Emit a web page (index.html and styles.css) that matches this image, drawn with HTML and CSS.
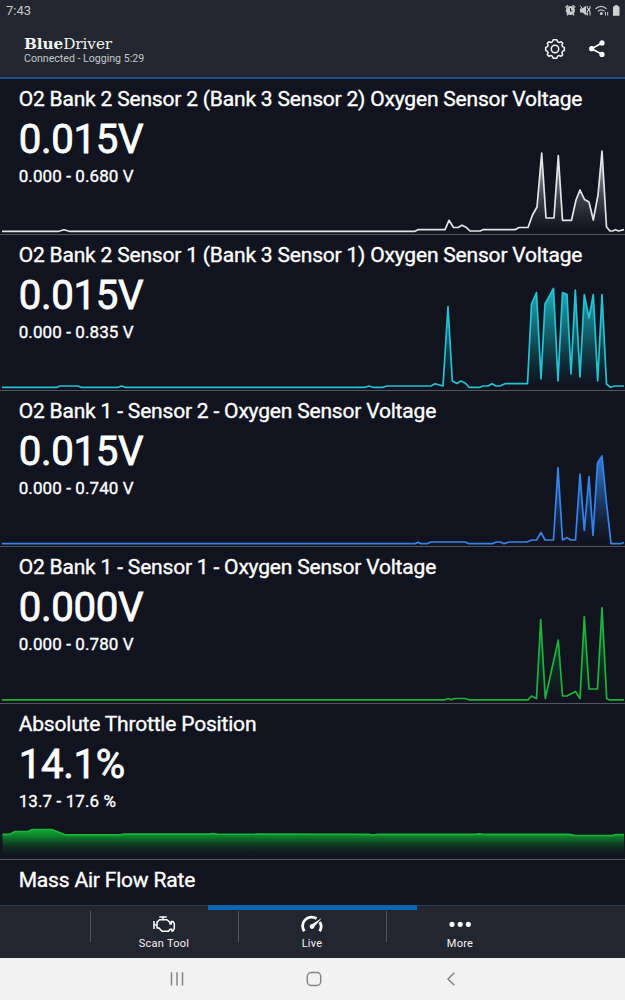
FILE: index.html
```html
<!DOCTYPE html>
<html lang="en">
<head>
<meta charset="utf-8">
<title>BlueDriver Live Data</title>
<link rel="stylesheet" href="styles.css">
</head>
<body>
<div class="screen">
  <header class="header">
    <div class="status">
      <span class="clock">7:43</span>
      <svg class="status-icons" width="56" height="14" viewBox="565 3 56 14">
        <g fill="none" stroke="#c9cacc" stroke-width="1.5">
          <path d="M565.5 7.5 L568 5.3 M575.2 7.5 L572.7 5.3 M567 15.2 L568 14 M574 15.2 L573 14"/>
          <path d="M595.500 8.800 Q601 4 606.500 8.800 M598 11.300 Q601 8.600 604.500 11.300" stroke-width="1.300"/>
          <path d="M605.500 12v3.500 M607.700 12v3.500" stroke-width="1"/>
          <path d="M587.300 6v2l1.500 1.500-1.500 2v4M590 6v2l-1 1.500 1 2v4" stroke-width="1.100"/>
        </g>
        <circle cx="570.400" cy="10.500" r="4.600" fill="#c9cacc"/>
        <path d="M570.500 8v3h2" fill="none" stroke="#23262f"/>
        <path d="M580 8.500h2.500l3.500-3v10l-3.500-3h-2.500z" fill="#c9cacc"/>
        <path d="M580 5.500l7.500 9.500" stroke="#c9cacc" stroke-width="1"/>
        <circle cx="601.300" cy="13.400" r="1.500" fill="#c9cacc"/>
        <path d="M613 6.500h1.500v-1.300h3.500v1.300h1.500v9.300h-6.500z" fill="#d0d1d3"/>
      </svg>
    </div>
    <div class="toolbar">
      <div class="brand">
        <div class="logo"><b>Blue</b>Driver</div>
        <div class="connection">Connected - Logging 5:29</div>
      </div>
      <div class="actions">
        <svg width="22" height="22" viewBox="-11 -11 22 22" fill="none" stroke="#f4f4f5" stroke-width="1.500" stroke-linejoin="round">
          <path d="M-1.800-9.200H1.800L2.700-7.100L4.200-6.500L6.200-7.300L7.700-5.800L6.900-3.900L7.400-2.400L9.300-1.600V1.600L7.400 2.400L6.900 3.900L7.700 5.800L6.200 7.300L4.200 6.500L2.700 7.100L1.800 9.200H-1.800L-2.700 7.100L-4.200 6.500L-6.200 7.300L-7.700 5.800L-6.900 3.900L-7.400 2.400L-9.300 1.600V-1.600L-7.400-2.400L-6.900-3.900L-7.700-5.800L-6.200-7.300L-4.200-6.500L-2.700-7.100Z"/>
          <circle r="3.700"/>
        </svg>
        <svg width="18" height="20" viewBox="588 39.500 18 20" fill="#fff">
          <path d="M602 43.500L591.500 49.200L602 54.800" fill="none" stroke="#fff" stroke-width="1.600"/>
          <circle cx="602" cy="43.400" r="2.600"/><circle cx="591.700" cy="49.200" r="2.600"/><circle cx="602" cy="54.900" r="2.600"/>
        </svg>
      </div>
    </div>
  </header>

  <main class="list">
    <section class="row">
      <div class="info">
        <h2 class="name">O2 Bank 2 Sensor 2 (Bank 3 Sensor 2) Oxygen Sensor Voltage</h2>
        <div class="value">0.015V</div>
        <div class="range">0.000 - 0.680 V</div>
      </div>
      <svg class="chart white" viewBox="0 79 625 156.250">
        <defs><linearGradient id="g1" gradientUnits="userSpaceOnUse" x1="0" y1="151" x2="0" y2="231"><stop offset="0" stop-color="#e8e8ea" stop-opacity=".9"/><stop offset=".55" stop-color="#a5a5ad" stop-opacity=".35"/><stop offset="1" stop-color="#777781" stop-opacity="0"/></linearGradient></defs>
        <path class="area" fill="url(#g1)" d="M519 231.300V227.500H528L532.500 215L537 207L541.700 153L546 218H554L558.300 155.500L562.500 220.300H571.500L576 200L580 190L584.500 199.500L589 202L593.300 220L598 195L602 151L606.500 227L610 231Z"/>
        <polyline points="2,231.300 59,231.300 64,229.800 69,231.300 415,231.300 418,229.700 445,229.700 449,220.300 453.500,227.500 458,227.500 462,225.200 466,227.200 470,231 480,231 483,229.700 515,229.700 519,227.500 528,227.500 532.500,215 537,207 541.700,153 546,218 554,218 558.300,155.500 562.500,220.300 571.500,220.300 576,200 580,190 584.500,199.500 589,202 593.300,220 598,195 602,151 606.500,227 610,231 613,230.800 615.500,229.700 618.500,231 624,229.700"/>
      </svg>
    </section>

    <section class="row">
      <div class="info">
        <h2 class="name">O2 Bank 2 Sensor 1 (Bank 3 Sensor 1) Oxygen Sensor Voltage</h2>
        <div class="value">0.015V</div>
        <div class="range">0.000 - 0.835 V</div>
      </div>
      <svg class="chart cyan" viewBox="0 235 625 156.250">
        <defs><linearGradient id="g2" gradientUnits="userSpaceOnUse" x1="0" y1="288" x2="0" y2="387"><stop offset="0" stop-color="#20bacb" stop-opacity=".95"/><stop offset=".5" stop-color="#149aa6" stop-opacity=".5"/><stop offset="1" stop-color="#0d5961" stop-opacity="0"/></linearGradient></defs>
        <path class="area" fill="url(#g2)" d="M443 386L448 306.500L452.300 381L457 387ZM527.500 387V383.700L531.500 304L536.500 292.500L541 379L545 304L553.500 288.500L558 381L562.500 292.500L567 294.500L571 374L575.300 290L580 377L584.300 294.500L589 318L593.300 294.500L597.700 381L602 294.500L606.500 384L610 387Z"/>
        <polyline points="2,387.300 57,387.300 60,386 78,386 81,387.300 118,387.300 121.500,386 125,387.300 365,387.300 369,386 373,387.300 383,387.300 387,386 431,386 435,383.700 443,386 448,306.500 452.300,381 457,383.500 461,381 465.500,383.300 469,387.300 480,387.300 483,386 488,386 492,383.700 496,386 500,386 505,383.700 527.500,383.700 531.500,304 536.500,292.500 541,379 545,304 553.500,288.500 558,381 562.500,292.500 567,294.500 571,374 575.300,290 580,377 584.300,294.500 589,318 593.300,294.500 597.700,381 602,294.500 606.500,384 610.500,387.300 615,386 624,386"/>
      </svg>
    </section>

    <section class="row">
      <div class="info">
        <h2 class="name">O2 Bank 1 - Sensor 2 - Oxygen Sensor Voltage</h2>
        <div class="value">0.015V</div>
        <div class="range">0.000 - 0.740 V</div>
      </div>
      <svg class="chart blue" viewBox="0 391 625 156.250">
        <defs><linearGradient id="g3" gradientUnits="userSpaceOnUse" x1="0" y1="456" x2="0" y2="543"><stop offset="0" stop-color="#3484e8" stop-opacity=".95"/><stop offset=".5" stop-color="#2867b5" stop-opacity=".5"/><stop offset="1" stop-color="#153766" stop-opacity="0"/></linearGradient></defs>
        <path class="area" fill="url(#g3)" d="M553.500 543V540L558 467.500L562.500 540H575.500L580 474L584.300 530.500L589 476.500L593 535.500L597.500 463L602 456L606.500 503L611 543.500Z"/>
        <polyline points="2,543.600 415,543.600 418,542.400 421,543.600 427,543.600 431,542 465,542 469,543.600 493,543.600 496,542 500,542 504,543.600 509,542 527,542 532,540 536.500,540 541,532.500 545,540 553.500,540 558,467.500 562.500,540 567,537.700 571,540 575.500,540 580,474 584.300,530.500 589,476.500 593,535.500 597.500,463 602,456 606.500,503 611,543.600 621,543.600 624,542.500"/>
      </svg>
    </section>

    <section class="row">
      <div class="info">
        <h2 class="name">O2 Bank 1 - Sensor 1 - Oxygen Sensor Voltage</h2>
        <div class="value">0.000V</div>
        <div class="range">0.000 - 0.780 V</div>
      </div>
      <svg class="chart green" viewBox="0 547 625 156.250">
        <defs><linearGradient id="g4" gradientUnits="userSpaceOnUse" x1="0" y1="607" x2="0" y2="699"><stop offset="0" stop-color="#1cb442" stop-opacity=".8"/><stop offset=".5" stop-color="#168237" stop-opacity=".4"/><stop offset="1" stop-color="#0d4921" stop-opacity="0"/></linearGradient></defs>
        <path class="area" fill="url(#g4)" d="M536.500 698.500L540.700 619.500L545.300 698.500L558.300 640L562.500 696H567L575.500 691.500L580 698.500L584.300 616.500L589 689H597.500L602 607.500L606.700 698.500Z"/>
        <polyline points="2,699.800 445,699.800 448,698.500 451,699.800 455,698.500 465,698.500 469,699.800 528,699.800 531.500,696 536.500,698.500 540.700,619.500 545.300,698.500 558.300,640 562.500,696 567,696 575.500,691.500 580,698.500 584.300,616.500 589,689 597.500,689 602,607.500 606.700,698.500 609,699.800 624,699.800"/>
      </svg>
    </section>

    <section class="row">
      <div class="info">
        <h2 class="name">Absolute Throttle Position</h2>
        <div class="value">14.1%</div>
        <div class="range">13.7 - 17.6 %</div>
      </div>
      <svg class="chart green" viewBox="0 704 625 156.250">
        <defs><linearGradient id="g5" gradientUnits="userSpaceOnUse" x1="0" y1="829" x2="0" y2="857"><stop offset="0" stop-color="#10a832"/><stop offset=".25" stop-color="#0c842a"/><stop offset="1" stop-color="#10131f" stop-opacity=".1"/></linearGradient></defs>
        <path class="area" fill="url(#g5)" d="M2.500 857V834.300H10L15 831.500H28L32 829.500H52L58 832L65 834.800H120L124 834.200H369L373 835L378 834.400H570L575 835.500H612L616 834.500H624V857Z"/>
        <polyline points="2.500,834.300 10,834.300 15,831.500 28,831.500 32,829.500 52,829.500 58,832 65,834.800 120,834.800 124,834.200 210,834.200 213,833.500 217,834.200 369,834.300 373,835 378,834.400 476,834.400 479,833.900 483,834.400 570,834.400 575,835.500 612,835.500 616,834.500 624,834.500"/>
      </svg>
    </section>

    <section class="row">
      <div class="info"><h2 class="name">Mass Air Flow Rate</h2></div>
    </section>
  </main>

  <nav class="tabs">
    <div class="indicator"></div>
    <div class="tab">
      <svg width="24" height="20" viewBox="152 914 24 20" fill="none" stroke="#fff" stroke-width="1.500" stroke-linejoin="round">
        <path d="M154 921V929M154 925H157M159.300 917H166.700M163 917V919.500M157 922.300L159.500 919.700H167L170 922.500V924H171.300V921.500H173L174.300 923.500V928.500L173 931H171.800V929.300H170L168.500 931.200H162L159 928H157Z"/>
      </svg>
      <span>Scan Tool</span>
    </div>
    <div class="tab">
      <svg width="24" height="20" viewBox="300 914 24 20" fill="none" stroke="#fff">
        <path d="M304.300 931.300A9 9 0 0 1 316.500 918.500M319.800 922A9 9 0 0 1 319.700 931.300" stroke-width="2.800"/>
        <path d="M310.500 925.200L321.800 918L313.400 927.800Z" fill="#fff" stroke="none"/>
        <circle cx="312" cy="926.600" r="2.400" fill="#fff" stroke="none"/>
      </svg>
      <span>Live</span>
    </div>
    <div class="tab">
      <svg width="24" height="20" viewBox="448 914 24 20" fill="#fff"><circle cx="452" cy="924.300" r="2.600"/><circle cx="460.200" cy="924.300" r="2.600"/><circle cx="468.300" cy="924.300" r="2.600"/></svg>
      <span>More</span>
    </div>
  </nav>

  <footer class="system">
    <svg width="625" height="42" viewBox="0 958 625 42" fill="none" stroke="#858585" stroke-width="1.500">
      <path d="M171.500 972.200v13.300M177 972.200v13.300M182.500 972.200v13.300"/>
      <rect x="307.300" y="972.500" width="13.400" height="13" rx="4"/>
      <path d="M454.300 972.700L448 979L454.300 985.300"/>
    </svg>
  </footer>
</div>
</body>
</html>
```

FILE: styles.css
```css
* { box-sizing: border-box; }
body { margin: 0; background: #11131e; font-family: Roboto, sans-serif; color: #fff; }
svg { display: block; }
.screen { width: 625px; height: 1000px; display: flex; flex-direction: column; overflow: hidden; }

.header { height: 79px; flex: none; background: #23262f; border-bottom: 2px solid #1f5089; }
.status { height: 22px; display: flex; justify-content: space-between; padding: 3px 4px 0 6px; }
.clock { font-size: 13px; line-height: 16px; color: #c5c7cb; }
.toolbar { display: flex; justify-content: space-between; padding: 14px 19px 0 24px; }
.logo { font-family: "DejaVu Serif", serif; font-size: 15.3px; line-height: 17px; letter-spacing: -.1px; color: #f2f3f4; white-space: nowrap; }
.connection { font-size: 10.6px; line-height: 12px; color: #c3c6cc; white-space: nowrap; }
.actions { display: flex; align-items: center; gap: 22px; height: 26px; }

.list { height: 826px; flex: none; overflow: hidden; }
.row { height: 156.25px; display: grid; border-bottom: 1px solid #54565f; }
.row:first-child { margin-top: -.4px; }
.info, .chart { grid-area: 1 / 1; min-width: 0; }
.info { padding: 7px 0 0 18.7px; -webkit-text-stroke: .35px #fff; }
.chart { width: 625px; height: 156.25px; }
.chart polyline { fill: none; stroke-width: 1.7; stroke-linejoin: round; }
.white polyline { stroke: #e4e4e7; }
.cyan polyline { stroke: #24c3d4; }
.blue polyline { stroke: #3684e9; }
.green polyline { stroke: #1cb43b; }
.name { margin: 0; font-size: 21px; font-weight: 400; line-height: 26px; letter-spacing: -.19px; white-space: nowrap; }
.value { font-size: 40.2px; line-height: 48px; margin-top: 4px; letter-spacing: -.35px; -webkit-text-stroke-width: .8px; }
.range { font-size: 17px; line-height: 22px; margin-top: 1px; letter-spacing: .1px; }

.tabs { height: 53px; flex: none; display: grid; grid-template-columns: 148px 148px 148px; padding-left: 90px; background: #23262f; border-top: 1px solid #24404f; position: relative; }
.indicator { position: absolute; left: 208px; top: -1px; width: 209px; height: 4.5px; background: #0b66b4; }
.tab { display: flex; flex-direction: column; align-items: center; padding-top: 8px; font-size: 11px; letter-spacing: .25px; line-height: 16px; color: #f1f2f3; background: linear-gradient(#555760, #555760) 0 5px / 1px 31px no-repeat; }
.tab span { margin-top: 2px; }
.system { height: 42px; flex: none; background: #f2f2f2; }
```
